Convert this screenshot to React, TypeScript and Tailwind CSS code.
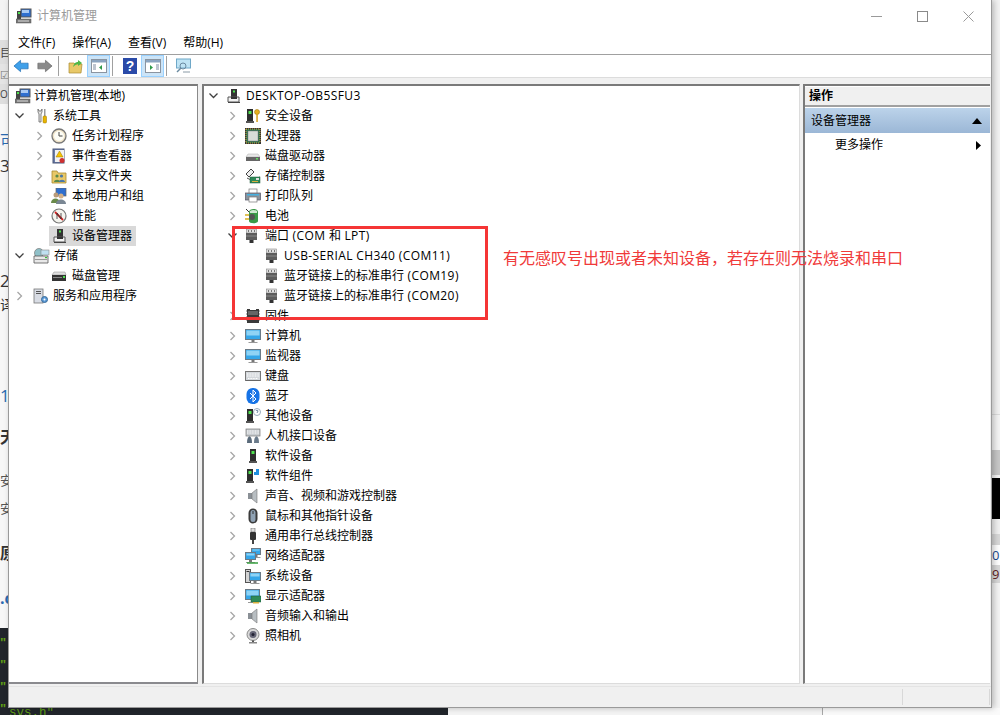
import React from "react";

const FONT = "font-['Open_Sans','Noto_Sans_CJK_SC',sans-serif]";
type I = React.ReactNode;
const S = ({ c, w = 16, h = 16, cn = "" }: { c: I; w?: number; h?: number; cn?: string }) => (
  <svg width={w} height={h} viewBox={`0 0 ${w} ${h}`} className={"shrink-0 " + cn}>{c}</svg>
);

const Tower = ({ x = 0, y = 0 }: { x?: number; y?: number }) => (
  <g transform={`translate(${x} ${y})`}>
    <rect x="2" y="1" width="6" height="12" fill="#2d2d2d" />
    <rect x="3.500" y="3" width="3" height="3" fill="#4fe04f" />
    <rect x="1" y="13" width="8" height="2" fill="#555" />
  </g>
);
const Mon = ({ x = 0, y = 0, w = 14, h = 10 }: { x?: number; y?: number; w?: number; h?: number }) => (
  <g transform={`translate(${x} ${y})`}>
    <rect x="0.500" y="0.500" width={w} height={h} fill="#35a6e8" stroke="#6b7a86" />
    <rect x="1.500" y="1.500" width={w - 2} height={h - 5} fill="#8fd3f5" />
    <rect x={w / 2 - 1} y={h + 1} width="3" height="2" fill="#777" />
    <rect x={w / 2 - 4} y={h + 3} width="9" height="1" fill="#999" />
  </g>
);
const CompMgmt = () => (
  <S c={<>
    <rect x="5" y="1" width="10" height="8" fill="#2f6fd0" stroke="#555" />
    <rect x="6" y="2" width="7" height="3" fill="#a9c9f2" />
    <rect x="1" y="3" width="4" height="8" fill="#444" />
    <rect x="2" y="4" width="2" height="2" fill="#4fe04f" />
    <rect x="0" y="11" width="15" height="4" fill="#777" stroke="#555" strokeWidth=".5" />
    <rect x="2" y="12.500" width="11" height="1" fill="#ddd" />
  </>} />
);
const DevMgr = () => (
  <S c={<>
    <rect x="5" y="1" width="6" height="8" fill="#333" />
    <rect x="7" y="2.500" width="2" height="2" fill="#4fe04f" />
    <path d="M3 9h10v5H2V9z" fill="#f2f2f2" stroke="#555" />
    <rect x="5" y="9" width="6" height="2" fill="#333" />
    <rect x="2" y="14" width="12" height="1" fill="#444" />
  </>} />
);
const Tools = () => (
  <S c={<>
    <path d="M5 1v3l1 2v8h2V6l1-2V1L8 3H6z" fill="#e8e8e8" stroke="#666" strokeWidth=".8" />
    <rect x="11" y="1" width="1.500" height="7" fill="#999" />
    <rect x="10" y="8" width="3.500" height="7" rx="1" fill="#e8b400" stroke="#9a7500" strokeWidth=".5" />
  </>} />
);
const Clock = () => (
  <S c={<>
    <circle cx="8" cy="8" r="7" fill="#efe3c8" stroke="#777" strokeWidth="1.300" />
    <circle cx="8" cy="8" r="5" fill="#fdfdf6" />
    <path d="M8 4v4h3.500" fill="none" stroke="#444" strokeWidth="1" />
  </>} />
);
const Events = () => (
  <S c={<>
    <rect x="2" y="1" width="11" height="14" fill="#6a7ca8" stroke="#4a5778" />
    <rect x="4" y="2" width="9" height="12" fill="#f2f2f2" />
    <path d="M8.500 3l3.500 6H5z" fill="#f6c400" stroke="#9a7500" strokeWidth=".5" />
    <circle cx="11" cy="12.500" r="2.500" fill="#d03030" />
  </>} />
);
const Shared = () => (
  <S c={<>
    <path d="M1 3h5l1 2h8v10H1z" fill="#e8c868" stroke="#a98a30" strokeWidth=".8" />
    <circle cx="6" cy="8" r="1.600" fill="#5a8a4a" /><path d="M3 14c0-3 6-3 6 0z" fill="#5a8a4a" />
    <circle cx="10.500" cy="8" r="1.600" fill="#4a78a8" /><path d="M8 14c0-3 6-3 6 0z" fill="#4a78a8" />
  </>} />
);
const Users = () => (
  <S c={<>
    <rect x="5" y="0" width="10" height="8" fill="#2f6fd0" stroke="#666" strokeWidth=".7" />
    <circle cx="5" cy="7" r="2.500" fill="#b99b7a" /><path d="M0 15c0-6 9-6 9 0z" fill="#6a8a4a" />
    <circle cx="10" cy="8" r="2.500" fill="#d4b18a" /><path d="M5 16c0-6 10-6 10 0z" fill="#7a8794" />
  </>} />
);
const Perf = () => (
  <S c={<>
    <circle cx="8" cy="8" r="7" fill="#f4f4ee" stroke="#777" strokeWidth="1.200" />
    <path d="M4 4l8 8" stroke="#d82020" strokeWidth="1.800" />
    <path d="M6 11V5l4 6V5" fill="none" stroke="#333" strokeWidth=".8" />
  </>} />
);
const Storage = () => (
  <S w={17} c={<>
    <circle cx="6" cy="5" r="4.500" fill="#8fc0c8" stroke="#777" strokeWidth=".7" />
    <rect x="8" y="2" width="8" height="5" fill="#bfe0f0" stroke="#888" strokeWidth=".6" />
    <path d="M1 8h14v7H1z" fill="#e8e8e8" stroke="#555" strokeWidth=".8" />
    <rect x="2" y="11" width="12" height="1" fill="#999" />
    <rect x="12" y="9" width="2" height="1.200" fill="#38c038" />
  </>} />
);
const DiskMgmt = () => (
  <S c={<>
    <path d="M3 4h11l1 3H1z" fill="#e0e0e0" stroke="#888" strokeWidth=".5" />
    <rect x="1" y="7" width="14" height="6" fill="#333" />
    <rect x="2" y="9" width="9" height="1" fill="#888" />
    <rect x="12" y="8" width="2" height="2" fill="#50e050" />
  </>} />
);
const Services = () => (
  <S c={<>
    <rect x="1" y="1" width="9" height="14" fill="#d8dce4" stroke="#777" strokeWidth=".8" />
    <rect x="3" y="3" width="5" height="1" fill="#555" /><rect x="3" y="5" width="5" height="1" fill="#555" />
    <circle cx="11.500" cy="11.500" r="3" fill="#5a9ad8" stroke="#3a6a98" />
    <circle cx="11.500" cy="11.500" r="1" fill="#fff" />
  </>} />
);
const Security = () => (
  <S c={<>
    <Tower />
    <circle cx="12" cy="4" r="2.500" fill="#e6b020" stroke="#a07a10" strokeWidth=".6" />
    <rect x="11.300" y="6" width="1.500" height="8" fill="#d8a018" />
  </>} />
);
const Cpu = () => (
  <S c={<>
    <rect x="0.500" y="0.500" width="15" height="15" fill="#2d6a4a" stroke="#333" />
    <rect x="3" y="3" width="10" height="10" fill="#d8dcd8" stroke="#888" strokeWidth=".5" />
    <path d="M1 1h14M1 15h14M1 1v14M15 1v14" stroke="#d8b040" strokeDasharray="1 1" />
  </>} />
);
const Disk = () => (
  <S c={<>
    <path d="M3 6h10l2 3H1z" fill="#e8e8e8" stroke="#aaa" strokeWidth=".5" />
    <rect x="1" y="9" width="14" height="4" fill="#666" />
    <rect x="11" y="10" width="2" height="1.500" fill="#60e060" />
  </>} />
);
const StorCtl = () => (
  <S c={<>
    <path d="M1 6l5-5 3 3-5 5z" fill="#eee" stroke="#444" />
    <path d="M2 10l4 2 9-3" fill="none" stroke="#555" />
    <rect x="5" y="9" width="10" height="6" fill="#2f8a58" stroke="#1c5a38" strokeWidth=".5" />
    <rect x="7" y="13" width="6" height="1" fill="#d8b040" />
    <rect x="11" y="10" width="3" height="2" fill="#ddd" />
  </>} />
);
const Printer = () => (
  <S c={<>
    <rect x="4" y="1" width="8" height="5" fill="#fff" stroke="#777" strokeWidth=".7" />
    <rect x="0.500" y="5" width="15" height="7" fill="#8a939c" stroke="#556" strokeWidth=".7" />
    <rect x="4" y="9" width="8" height="5" fill="#fff" stroke="#777" strokeWidth=".7" />
    <rect x="2" y="6" width="12" height="1.500" fill="#44b0e0" />
  </>} />
);
const Battery = () => (
  <S c={<>
    <path d="M4 4c0-4 9-4 9 0v9c0 3-9 3-9 0z" fill="#3a9a48" />
    <path d="M5 3c2-1.500 5-1.500 7 0v2H5z" fill="#cfe8d0" />
    <circle cx="7" cy="9" r="3" fill="#555" />
    <path d="M0 7h4M0 11h4" stroke="#d8b020" strokeWidth="1.400" />
    <path d="M1 1l3 3" stroke="#333" />
  </>} />
);
const Port = () => (
  <S c={<>
    <rect x="1.500" y="1" width="10" height="4" fill="#e0e0e0" stroke="#888" strokeWidth=".6" />
    <path d="M3.500 2v2M6.500 2v2M9.500 2v2" stroke="#777" />
    <rect x="1" y="5" width="11" height="7" fill="#5c5c5c" />
    <rect x="1" y="7.500" width="11" height="1" fill="#8a8a8a" />
    <rect x="4.500" y="12" width="4" height="3" fill="#333" />
  </>} />
);
const Firmware = () => (
  <S c={<>
    <path d="M2 1h3v1h6V1h3v14H2z" fill="#3a3a3a" />
    <rect x="3" y="3" width="10" height="4" fill="#666" />
    <path d="M1 3h1M1 6h1M1 9h1M1 12h1M14 3h1M14 6h1M14 9h1M14 12h1" stroke="#777" />
  </>} />
);
const Keyboard = () => (
  <S c={<>
    <rect x="0.500" y="3.500" width="15" height="9" fill="#d4d8dc" stroke="#777" />
    <path d="M2 6h12M2 8h12M3 10.500h10" stroke="#fff" strokeDasharray="1 .6" />
    <rect x="1" y="12" width="14" height="1" fill="#666" />
  </>} />
);
const Bt = () => (
  <S c={<>
    <rect x="1.500" y="0" width="13" height="16" rx="6" fill="#1673e6" />
    <path d="M5 5l6 6-3 3V2l3 3-6 6" fill="none" stroke="#fff" strokeWidth="1" />
  </>} />
);
const Other = () => (
  <S c={<>
    <Tower />
    <circle cx="12" cy="4" r="3.500" fill="#fff" stroke="#9ab" />
    <path d="M11 3c0-1 2-1 2 0s-1 1-1 2" fill="none" stroke="#468" strokeWidth=".8" />
  </>} />
);
const Hid = () => (
  <S c={<>
    <rect x="1" y="1" width="14" height="7" fill="#c8ccd0" stroke="#777" strokeWidth=".7" />
    <path d="M2 3h12M2 5h12" stroke="#fff" strokeDasharray="1 .6" />
    <path d="M2 15c0-9 5-9 5 0z" fill="#5a6a7a" />
    <path d="M9 15c0-9 5-9 5 0z" fill="#6a7a8a" />
  </>} />
);
const SoftDev = () => <S c={<Tower x={3} />} />;
const SoftComp = () => (
  <S c={<>
    <Tower />
    <rect x="11" y="1" width="3" height="3" fill="#2090e0" />
    <rect x="9" y="4" width="5" height="3" fill="#2090e0" />
  </>} />
);
const Sound = () => (
  <S c={<>
    <rect x="3" y="5" width="4" height="6" fill="#8a9096" />
    <path d="M7 5l5-4v14l-5-4z" fill="#b8bec2" stroke="#777" strokeWidth=".6" />
  </>} />
);
const Mouse = () => (
  <S c={<>
    <rect x="3.500" y="0.500" width="9" height="15" rx="4.500" fill="#3a3a3a" />
    <rect x="5.500" y="2" width="5" height="12" rx="2.500" fill="#8fa2b4" />
    <rect x="7.500" y="3" width="1" height="3" fill="#333" />
  </>} />
);
const Usb = () => (
  <S c={<>
    <rect x="6" y="0" width="4" height="4" fill="#ddd" stroke="#666" strokeWidth=".6" />
    <rect x="5" y="4" width="6" height="8" rx="1" fill="#333" />
    <rect x="7" y="12" width="2" height="4" fill="#444" />
  </>} />
);
const Net = () => (
  <S c={<>
    <Mon x={6} y={0} w={9} h={6} />
    <Mon x={0} y={4} w={10} h={7} />
    <path d="M2 15h11" stroke="#38a040" strokeWidth="1.500" />
  </>} />
);
const Sys = () => (
  <S c={<>
    <rect x="0.500" y="1.500" width="5" height="13" fill="#d4d4d4" stroke="#555" />
    <rect x="1.500" y="3" width="3" height="1" fill="#333" />
    <Mon x={4} y={4} w={11} h={8} />
  </>} />
);
const Disp = () => (
  <S c={<>
    <Mon x={0} y={1} w={14} h={10} />
    <rect x="6" y="8" width="10" height="6" fill="#2f8a58" stroke="#1c5a38" strokeWidth=".5" />
    <rect x="8" y="14" width="6" height="1.500" fill="#d8b040" />
  </>} />
);
const Cam = () => (
  <S c={<>
    <circle cx="8" cy="6.500" r="6" fill="#d8d8d8" stroke="#888" />
    <circle cx="8" cy="6.500" r="3.500" fill="#667" />
    <circle cx="8" cy="6.500" r="1.500" fill="#223" />
    <rect x="7" y="12.500" width="2" height="1.500" fill="#555" />
    <rect x="4" y="14" width="8" height="1.500" fill="#888" />
  </>} />
);

const Chev = ({ open = false }: { open?: boolean }) => (
  <svg width="9" height="10" viewBox="0 0 9 10" className="shrink-0">
    {open ? (
      <path d="M0.500 2.500L4.500 6.500 8.500 2.500" fill="none" stroke="#404040" strokeWidth="1.300" />
    ) : (
      <path d="M2.500 1L6.500 5 2.500 9" fill="none" stroke="#a6a6a6" strokeWidth="1.300" />
    )}
  </svg>
);

const Txt = ({ t }: { t: string }) => (
  <span className="whitespace-nowrap">
    {t.split(/([\x20-\x7e]+)/).map((p, i) =>
      /[\x20-\x7e]/.test(p) ? <span key={i} className="tracking-[0.4px]">{p}</span> : <span key={i}>{p}</span>
    )}
  </span>
);

const leftRows: { lv: number; chev?: "o" | "c"; icon: I; t: string; sel?: boolean }[] = [
  { lv: 0, icon: <CompMgmt />, t: "计算机管理(本地)" },
  { lv: 1, chev: "o", icon: <Tools />, t: "系统工具" },
  { lv: 2, chev: "c", icon: <Clock />, t: "任务计划程序" },
  { lv: 2, chev: "c", icon: <Events />, t: "事件查看器" },
  { lv: 2, chev: "c", icon: <Shared />, t: "共享文件夹" },
  { lv: 2, chev: "c", icon: <Users />, t: "本地用户和组" },
  { lv: 2, chev: "c", icon: <Perf />, t: "性能" },
  { lv: 2, icon: <DevMgr />, t: "设备管理器", sel: true },
  { lv: 1, chev: "o", icon: <Storage />, t: "存储" },
  { lv: 2, icon: <DiskMgmt />, t: "磁盘管理" },
  { lv: 1, chev: "c", icon: <Services />, t: "服务和应用程序" },
];

const midRows: { icon: I; t: string; kind?: "root" | "open" | "leaf" }[] = [
  { icon: <DevMgr />, t: "DESKTOP-OB5SFU3", kind: "root" },
  { icon: <Security />, t: "安全设备" },
  { icon: <Cpu />, t: "处理器" },
  { icon: <Disk />, t: "磁盘驱动器" },
  { icon: <StorCtl />, t: "存储控制器" },
  { icon: <Printer />, t: "打印队列" },
  { icon: <Battery />, t: "电池" },
  { icon: <Port />, t: "端口 (COM 和 LPT)", kind: "open" },
  { icon: <Port />, t: "USB-SERIAL CH340 (COM11)", kind: "leaf" },
  { icon: <Port />, t: "蓝牙链接上的标准串行 (COM19)", kind: "leaf" },
  { icon: <Port />, t: "蓝牙链接上的标准串行 (COM20)", kind: "leaf" },
  { icon: <Firmware />, t: "固件" },
  { icon: <S c={<Mon x={0} y={1} w={15} h={10} />} />, t: "计算机" },
  { icon: <S c={<Mon x={0} y={1} w={15} h={10} />} />, t: "监视器" },
  { icon: <Keyboard />, t: "键盘" },
  { icon: <Bt />, t: "蓝牙" },
  { icon: <Other />, t: "其他设备" },
  { icon: <Hid />, t: "人机接口设备" },
  { icon: <SoftDev />, t: "软件设备" },
  { icon: <SoftComp />, t: "软件组件" },
  { icon: <Sound />, t: "声音、视频和游戏控制器" },
  { icon: <Mouse />, t: "鼠标和其他指针设备" },
  { icon: <Usb />, t: "通用串行总线控制器" },
  { icon: <Net />, t: "网络适配器" },
  { icon: <Sys />, t: "系统设备" },
  { icon: <Disp />, t: "显示适配器" },
  { icon: <Sound />, t: "音频输入和输出" },
  { icon: <Cam />, t: "照相机" },
];

const Tb = ({ children, on = false }: { children: I; on?: boolean }) => (
  <div className={"w-[23px] h-[22px] flex items-center justify-center shrink-0 " + (on ? "bg-[#cce4f7] border border-[#99d1ff]" : "")}>{children}</div>
);
const Sep = () => <div className="w-px h-[20px] bg-[#a0a0a0] ml-[2px] mr-[5px] shrink-0" />;
const PaneIcon = ({ right = false }: { right?: boolean }) => (
  <S c={<>
    <rect x="0.500" y="1.500" width="15" height="13" fill="#fff" stroke="#8a94a0" />
    <rect x="1" y="2" width="14" height="2.500" fill="#8aa4c0" />
    {right
      ? <><path d="M5 7l3 2.500L5 12z" fill="#2f9a4a" /><path d="M11 7h3M11 9h3M11 11h3" stroke="#7a8aa0" /></>
      : <><path d="M11 7l-3 2.500L11 12z" fill="#2f9a4a" /><path d="M2 7h3M2 9h3M2 11h3" stroke="#7a8aa0" /></>}
  </>} />
);

const Frag = ({ h, t, cn = "" }: { h: string; t?: string; cn?: string }) => (
  <div className={"w-full shrink-0 overflow-hidden whitespace-nowrap leading-none flex items-center justify-start " + h + " " + cn}>{t}</div>
);

export default function App() {
  return (
    <div className={"w-[1000px] h-[715px] overflow-hidden bg-white flex flex-col text-black " + FONT}>
      <div className="flex h-[708px] shrink-0">
        <div className="w-[8px] shrink-0 flex flex-col bg-[#f7f7f7]">
          <Frag h="h-[40px]" cn="bg-[#f4f4f4]" />
          <Frag h="h-[24px]" cn="bg-[#dedede] text-[11px] text-[#444]" t="目" />
          <Frag h="h-[20px]" cn="bg-[#e4e4e4] text-[11px] text-[#777]" t="☑" />
          <Frag h="h-[20px]" cn="bg-[#dedede] text-[10px] text-[#444]" t="OP" />
          <Frag h="h-[26px]" />
          <Frag h="h-[20px]" cn="text-[15px] text-[#2a6ab0]" t="可" />
          <Frag h="h-[5px]" />
          <Frag h="h-[20px]" cn="text-[17px] text-[#333]" t="3" />
          <Frag h="h-[93px]" />
          <Frag h="h-[24px]" cn="text-[17px] text-[#333]" t="2" />
          <Frag h="h-[3px]" />
          <Frag h="h-[20px]" cn="text-[14px] text-[#333]" t="译" />
          <Frag h="h-[69px]" />
          <Frag h="h-[22px]" cn="text-[17px] text-[#2a6ab0]" t="1" />
          <Frag h="h-[19px]" />
          <Frag h="h-[24px]" cn="text-[16px] font-bold text-[#333]" t="天" />
          <Frag h="h-[21px]" />
          <Frag h="h-[20px]" cn="text-[13px] text-[#555]" t="安" />
          <Frag h="h-[8px]" />
          <Frag h="h-[20px]" cn="text-[13px] text-[#555]" t="安" />
          <Frag h="h-[23px]" />
          <Frag h="h-[24px]" cn="text-[16px] font-bold text-[#333]" t="原" />
          <Frag h="h-[23px]" />
          <Frag h="h-[20px]" cn="text-[16px] font-bold text-[#2a6ab0]" t=".c" />
          <Frag h="h-[20px]" />
          <div className="flex-1 bg-[#21252b] flex flex-col gap-[7px] pt-[7px] overflow-hidden">
            <Frag h="h-[15px]" cn="text-[13px] text-[#5f9e16] font-bold" t={'"'} />
            <Frag h="h-[15px]" cn="text-[13px] text-[#5f9e16] font-bold" t={'"'} />
            <Frag h="h-[15px]" cn="text-[13px] text-[#5f9e16] font-bold" t={'"'} />
            <Frag h="h-[15px]" cn="text-[13px] text-[#5f9e16] font-bold" t={'"'} />
          </div>
        </div>

        <div className="w-[984px] shrink-0 relative flex flex-col bg-[#f0f0f0] border-x border-b border-[#9a9a9a] shadow-[2px_0_6px_rgba(0,0,0,0.25)] z-10 text-[12px]">
          <div className="h-[32px] bg-white flex items-center pl-[7px] pr-[12px] shrink-0">
            <CompMgmt />
            <span className="ml-[5px] text-[#9a9a9a] text-[12px]">计算机管理</span>
            <div className="ml-auto flex items-center gap-[35px]">
              <div className="w-[11px] h-px bg-[#9a9a9a]" />
              <div className="w-[11px] h-[11px] border border-[#8a8a8a]" />
              <svg width="11" height="11" viewBox="0 0 11 11" className="mr-[5px]"><path d="M.5.5l10 10M10.500.5l-10 10" stroke="#9a9a9a" /></svg>
            </div>
          </div>
          <div className="h-[23px] bg-white border-b border-[#a0a0a0] flex items-center pl-[9px] gap-[17px] pb-[1px] shrink-0">
            <span>文件(F)</span><span>操作(A)</span><span>查看(V)</span><span>帮助(H)</span>
          </div>
          <div className="h-[23px] bg-white border-b border-[#dcdcdc] flex items-center pl-[1px] shrink-0">
            <Tb><svg width="17" height="14" viewBox="0 0 18 14"><path d="M1 7l7-6v3h8v6H8v3z" fill="#3fa0ea" stroke="#1c6ab0" strokeWidth=".7" /></svg></Tb>
            <Tb><svg width="17" height="14" viewBox="0 0 18 14"><path d="M17 7l-7-6v3H2v6h8v3z" fill="#8a8a8a" stroke="#666" strokeWidth=".7" /></svg></Tb>
            <Sep />
            <Tb><S c={<>
              <path d="M1 5h5l1 1h7l-1 9H1z" fill="#e8c868" stroke="#a98a30" strokeWidth=".7" />
              <path d="M5 9c1-4 3-5 5-5V2l4 3-4 3V6c-1 0-3 1-5 3z" fill="#4fb848" />
            </>} /></Tb>
            <Tb on><PaneIcon /></Tb>
            <Sep />
            <Tb><svg width="14" height="16" viewBox="0 0 14 16"><rect width="14" height="16" fill="#2a4aa8" /><text x="7" y="13" textAnchor="middle" fontSize="14" fontWeight="700" fill="#fff" fontFamily="Liberation Sans">?</text></svg></Tb>
            <Tb on><PaneIcon right /></Tb>
            <Sep />
            <Tb><S w={17} c={<>
              <rect x="1.500" y="1" width="14" height="9" fill="#bfe4f5" stroke="#6fa8c8" />
              <circle cx="8" cy="8" r="3" fill="none" stroke="#6a8aa0" />
              <path d="M6 10l-4 4" stroke="#6a8aa0" strokeWidth="1.500" />
              <path d="M8 14h7" stroke="#8a9aa6" />
            </>} /></Tb>
          </div>
          <div className="flex h-[600px] mt-[6px] shrink-0">
            <div className="w-[189px] shrink-0 bg-white border-t-2 border-t-[#7a7a7a] border-r border-b-2 border-r-[#8a8a8a] border-b-[#8a8a8e]">
              {leftRows.map((r, i) => (
                <div key={i} className={"h-5 flex items-center " + (r.lv === 2 ? "pl-[26px]" : "pl-[6px]")}>
                  {r.lv > 0 && (
                    <div className={"shrink-0 flex items-center " + (r.lv === 2 ? "w-[16px]" : "w-[18px]")}>
                      {r.chev && <Chev open={r.chev === "o"} />}
                    </div>
                  )}
                  <div className={"flex items-center h-5 " + (r.sel ? "bg-[#d9d9d9] -ml-[2px] pl-[3px] pr-[4px] gap-[4px]" : r.lv === 0 ? "gap-[3px]" : r.lv === 1 ? "gap-[4px]" : "gap-[5px]")}>
                    {r.icon}<span className="whitespace-nowrap">{r.t}</span>
                  </div>
                </div>
              ))}
            </div>
            <div className="w-[4px] shrink-0" />
            <div className="w-[598px] shrink-0 bg-white border-l-2 border-t-2 border-[#7a7a7a] border-r border-b border-r-[#dcdcdc] border-b-[#dcdcdc]">
              {midRows.map((r, i) => (
                <div key={i} className={"h-5 flex items-center " + (r.kind === "root" ? "pl-[5px]" : r.kind === "leaf" ? "pl-[61px]" : "pl-[24px]")}>
                  {r.kind !== "leaf" && <div className="w-[17px] shrink-0"><Chev open={r.kind === "root" || r.kind === "open"} /></div>}
                  <div className={"flex items-center " + (r.kind === "leaf" ? "gap-[3px]" : "gap-[4px]")}>
                    {r.icon}
                    <Txt t={r.t} />
                  </div>
                </div>
              ))}
            </div>
            <div className="w-[3px] shrink-0" />
            <div className="flex-1 bg-white border-l-2 border-t-2 border-[#7a7a7a] border-b border-b-[#dcdcdc] mr-[1px]">
              <div className="h-[20px] bg-[#f0f0f0] border-b-2 border-[#a0a0a0] flex items-center pl-[4px] font-bold mt-[1px]">操作</div>
              <div className="h-[25px] bg-gradient-to-b from-[#bcd3ea] to-[#9bb7d6] flex items-center pl-[6px] pr-[8px] mt-[1px]">
                <span>设备管理器</span>
                <svg width="10" height="6" viewBox="0 0 10 6" className="ml-auto"><path d="M0 6l5-6 5 6z" fill="#000" /></svg>
              </div>
              <div className="h-[24px] flex items-center pl-[30px] pr-[9px]">
                <span>更多操作</span>
                <svg width="5" height="9" viewBox="0 0 5 9" className="ml-auto"><path d="M0 0l5 4.500L0 9z" fill="#000" /></svg>
              </div>
            </div>
          </div>
          <div className="flex-1 mt-[2px] border-t border-[#e4e4e4] flex">
            <div className="w-[894px] border-r border-[#d8d8d8] my-[2px]" />
            <div className="flex-1 border-r border-[#d8d8d8] my-[2px] mr-[1px]" />
          </div>

          <div className="absolute left-[223px] top-[226px] w-[256px] h-[94px] border-[3px] border-[#f53535] pointer-events-none" />
          <div className="absolute left-[494px] top-[248px] text-[16px] leading-[20px] text-[#f03a3a] whitespace-nowrap">有无感叹号出现或者未知设备，若存在则无法烧录和串口</div>
        </div>

        <div className="w-[8px] shrink-0 flex flex-col bg-[#f4f4f4]">
          <div className="h-[415px] bg-[#f2f2f2] border-b border-[#dcdcdc]" />
          <div className="h-[35px]" />
          <div className="h-[25px] bg-[#c8c8c8]" />
          <div className="h-[3px]" />
          <div className="h-[41px] bg-black" />
          <div className="h-[15px] bg-[#f0f0f0]" />
          <div className="h-[11px] bg-[#d8d8d8]" />
          <Frag h="h-[20px]" cn="bg-[#fff] text-[13px] text-[#1a4a90]" t="0" />
          <Frag h="h-[18px]" cn="bg-[#d8d8d8] text-[13px] text-[#602020]" t="9" />
          <div className="flex-1 bg-[#f4f4f4]" />
        </div>
      </div>
      <div className="flex-1 flex">
        <div className="w-[448px] bg-[#21252b] pl-[9px] text-[12.500px] leading-[10px] text-[#5f9e16] font-['Liberation_Mono',monospace] overflow-hidden whitespace-nowrap">sys.h"</div>
        <div className="w-[375px] bg-[#f4f4f4] border-r border-[#a8a8a8]" />
        <div className="flex-1 bg-[#fafafa]" />
      </div>
    </div>
  );
}
